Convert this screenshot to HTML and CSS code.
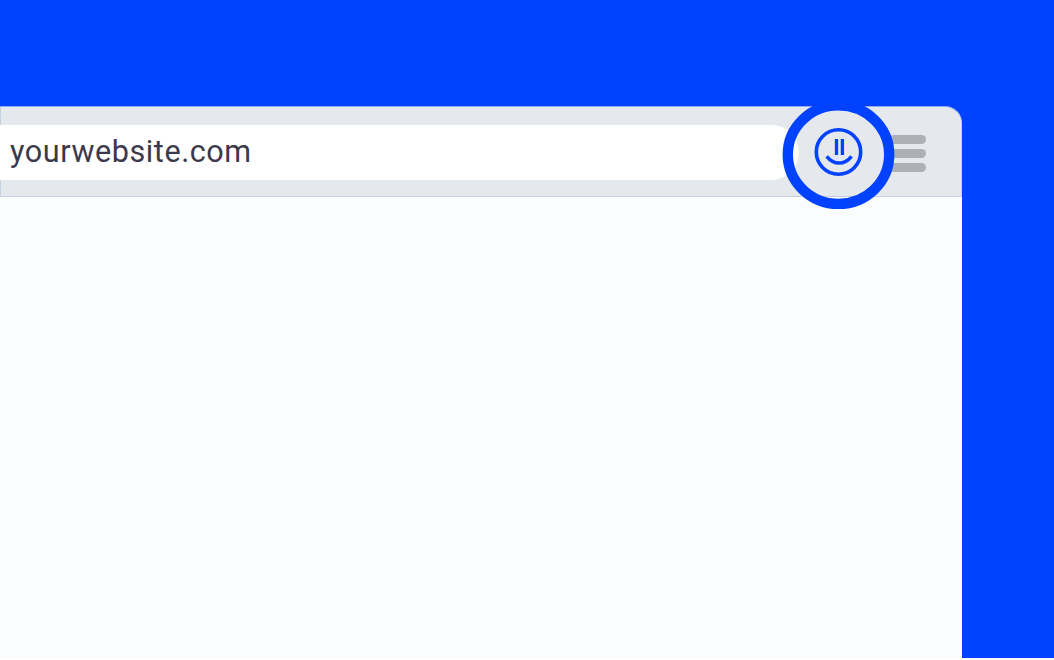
FILE: index.html
```html
<!DOCTYPE html>
<html lang="en">
<head>
<meta charset="utf-8">
<title>Browser</title>
<link rel="stylesheet" href="styles.css">
</head>
<body>
<main class="scene">
  <section class="browser">
    <header class="toolbar">
      <div class="address"><span class="url">yourwebsite.com</span></div>
      <div class="menu"><span class="bar"></span><span class="bar"></span><span class="bar"></span></div>
      <svg class="extension" viewBox="0 0 112 110" fill="none" stroke="#0042ff">
        <ellipse cx="55.5" cy="54.6" rx="50.7" ry="49.3" stroke-width="10.4"/>
        <circle cx="55.5" cy="52" r="22.2" stroke-width="3.6"/>
        <path d="M53.5 39v16M59.4 39v16" stroke-width="3.3"/>
        <path d="M43.7 56.3Q49 63 56.1 63T68.5 56.3" stroke-width="3.5"/>
      </svg>
    </header>
    <div class="page"></div>
  </section>
</main>
</body>
</html>
```
FILE: styles.css
```css
body {
  margin: 0;
  background: #fff;
}

.scene {
  box-sizing: border-box;
  height: 658px;
  padding-top: 106px;
  background: #0042ff;
}

.browser {
  display: flex;
  flex-direction: column;
  width: 962px;
  height: 552px;
}

.toolbar {
  position: relative;
  box-sizing: border-box;
  display: flex;
  align-items: center;
  justify-content: space-between;
  height: 91px;
  padding: 1px 35px 0 0;
  background: #e5e8ed;
  border: 1px solid #c5d0e0;
  border-top-color: #8eacf2;
  border-radius: 0 17px 0 0;
}

.address {
  display: flex;
  align-items: center;
  box-sizing: border-box;
  width: 799px;
  height: 55px;
  margin-left: -1px;
  padding: 0 0 3px 10px;
  background: #fff;
  border-radius: 0 27.5px 27.5px 0;
}

.url {
  color: #3b394b;
  font: 32px/40px Roboto, sans-serif;
  letter-spacing: 0.6px;
  transform: scaleX(0.955);
  transform-origin: left;
}

.menu {
  display: flex;
  flex-direction: column;
  gap: 5px;
  padding-top: 2px;
}

.bar {
  width: 37px;
  height: 9px;
  background: #adb1b7;
  border-radius: 4.5px;
}

.extension {
  position: absolute;
  top: -7px;
  left: 782px;
  width: 112px;
  height: 110px;
  overflow: visible;
}

.page {
  flex: 1;
  background: #fafcfe;
}
```
